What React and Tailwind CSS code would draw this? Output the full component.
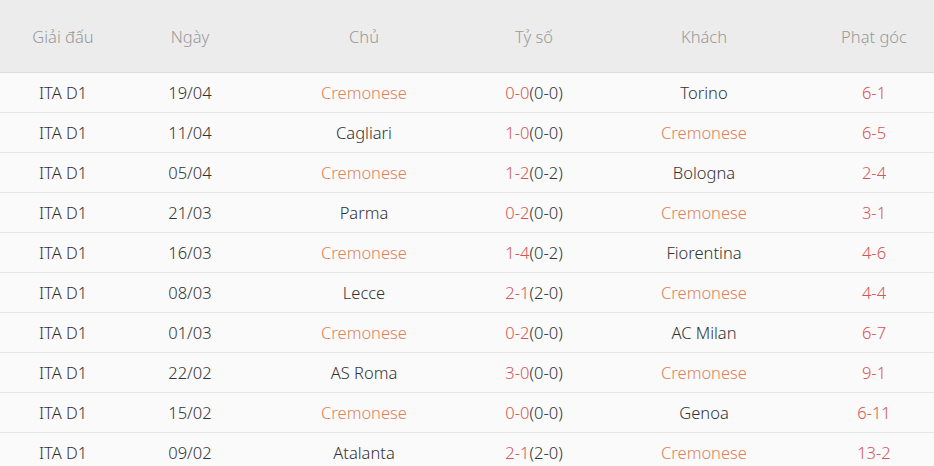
const rows = [
  ["ITA D1", "19/04", "Cremonese", "0-0", "(0-0)", "Torino", "6-1", true],
  ["ITA D1", "11/04", "Cagliari", "1-0", "(0-0)", "Cremonese", "6-5", false],
  ["ITA D1", "05/04", "Cremonese", "1-2", "(0-2)", "Bologna", "2-4", true],
  ["ITA D1", "21/03", "Parma", "0-2", "(0-0)", "Cremonese", "3-1", false],
  ["ITA D1", "16/03", "Cremonese", "1-4", "(0-2)", "Fiorentina", "4-6", true],
  ["ITA D1", "08/03", "Lecce", "2-1", "(2-0)", "Cremonese", "4-4", false],
  ["ITA D1", "01/03", "Cremonese", "0-2", "(0-0)", "AC Milan", "6-7", true],
  ["ITA D1", "22/02", "AS Roma", "3-0", "(0-0)", "Cremonese", "9-1", false],
  ["ITA D1", "15/02", "Cremonese", "0-0", "(0-0)", "Genoa", "6-11", true],
  ["ITA D1", "09/02", "Atalanta", "2-1", "(2-0)", "Cremonese", "13-2", false],
];

const cols = "grid grid-cols-[126px_128px_220px_120px_220px_120px]";

export default function App() {
  return (
    <div
      className="w-[934px] h-[466px] overflow-hidden bg-[#fafafa] text-[16.5px] text-[#333] font-[350]"
      style={{ fontFamily: '"Noto Sans", "Open Sans", sans-serif' }}
    >
      <div className={`${cols} h-[73px] pt-[2px] items-center bg-[#ececec] border-b border-[#dddddd] text-[#999] text-center`}>
        <div>Giải đấu</div>
        <div>Ngày</div>
        <div>Chủ</div>
        <div>Tỷ số</div>
        <div>Khách</div>
        <div>Phạt góc</div>
      </div>
      {rows.map((r, i) => (
        <div
          key={i}
          className={`${cols} h-[40px] pt-[2px] items-center text-center border-b border-[#e6e6e6]`}
        >
          <div>{r[0]}</div>
          <div>{r[1]}</div>
          <div className={r[7] ? "text-[#e0805a]" : ""}>{r[2]}</div>
          <div>
            <span className="text-[#d65558]">{r[3]}</span>
            {r[4]}
          </div>
          <div className={r[7] ? "" : "text-[#e0805a]"}>{r[5]}</div>
          <div className="text-[#d65558]">{r[6]}</div>
        </div>
      ))}
    </div>
  );
}
